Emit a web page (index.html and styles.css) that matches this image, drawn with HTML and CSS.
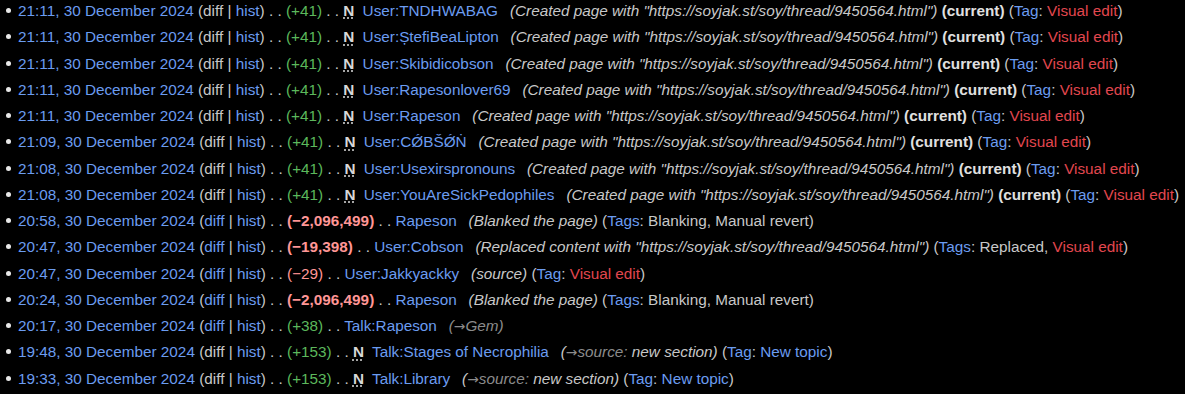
FILE: index.html
```
<!DOCTYPE html>
<html lang="en">
<head>
    <meta charset="UTF-8">
    <title>User contributions</title>
    <link rel="stylesheet" href="styles.css">
</head>
<body>
    <ul class="contribs">
        <li><a href="#">21:11, 30 December 2024</a> (<span class="dim">diff</span> | <a href="#">hist</a>) . . <span class="plus">(+41)</span> . . <abbr class="newpage" title="This edit created a new page">N</abbr> <a href="#">User:TNDHWABAG</a> <span class="comment">(Created page with "https://soyjak.st/soy/thread/9450564.html")</span> <b class="current">(current)</b> (<a href="#">Tag</a>: <a class="new" href="#">Visual edit</a>)</li>
        <li><a href="#">21:11, 30 December 2024</a> (<span class="dim">diff</span> | <a href="#">hist</a>) . . <span class="plus">(+41)</span> . . <abbr class="newpage" title="This edit created a new page">N</abbr> <a href="#">User:ȘtefiBeaLipton</a> <span class="comment">(Created page with "https://soyjak.st/soy/thread/9450564.html")</span> <b class="current">(current)</b> (<a href="#">Tag</a>: <a class="new" href="#">Visual edit</a>)</li>
        <li><a href="#">21:11, 30 December 2024</a> (<span class="dim">diff</span> | <a href="#">hist</a>) . . <span class="plus">(+41)</span> . . <abbr class="newpage" title="This edit created a new page">N</abbr> <a href="#">User:Skibidicobson</a> <span class="comment">(Created page with "https://soyjak.st/soy/thread/9450564.html")</span> <b class="current">(current)</b> (<a href="#">Tag</a>: <a class="new" href="#">Visual edit</a>)</li>
        <li><a href="#">21:11, 30 December 2024</a> (<span class="dim">diff</span> | <a href="#">hist</a>) . . <span class="plus">(+41)</span> . . <abbr class="newpage" title="This edit created a new page">N</abbr> <a href="#">User:Rapesonlover69</a> <span class="comment">(Created page with "https://soyjak.st/soy/thread/9450564.html")</span> <b class="current">(current)</b> (<a href="#">Tag</a>: <a class="new" href="#">Visual edit</a>)</li>
        <li><a href="#">21:11, 30 December 2024</a> (<span class="dim">diff</span> | <a href="#">hist</a>) . . <span class="plus">(+41)</span> . . <abbr class="newpage" title="This edit created a new page">N</abbr> <a href="#">User:Rapeson</a> <span class="comment">(Created page with "https://soyjak.st/soy/thread/9450564.html")</span> <b class="current">(current)</b> (<a href="#">Tag</a>: <a class="new" href="#">Visual edit</a>)</li>
        <li><a href="#">21:09, 30 December 2024</a> (<span class="dim">diff</span> | <a href="#">hist</a>) . . <span class="plus">(+41)</span> . . <abbr class="newpage" title="This edit created a new page">N</abbr> <a href="#">User:CǾBŠǾṄ</a> <span class="comment">(Created page with "https://soyjak.st/soy/thread/9450564.html")</span> <b class="current">(current)</b> (<a href="#">Tag</a>: <a class="new" href="#">Visual edit</a>)</li>
        <li><a href="#">21:08, 30 December 2024</a> (<span class="dim">diff</span> | <a href="#">hist</a>) . . <span class="plus">(+41)</span> . . <abbr class="newpage" title="This edit created a new page">N</abbr> <a href="#">User:Usexirspronouns</a> <span class="comment">(Created page with "https://soyjak.st/soy/thread/9450564.html")</span> <b class="current">(current)</b> (<a href="#">Tag</a>: <a class="new" href="#">Visual edit</a>)</li>
        <li><a href="#">21:08, 30 December 2024</a> (<span class="dim">diff</span> | <a href="#">hist</a>) . . <span class="plus">(+41)</span> . . <abbr class="newpage" title="This edit created a new page">N</abbr> <a href="#">User:YouAreSickPedophiles</a> <span class="comment">(Created page with "https://soyjak.st/soy/thread/9450564.html")</span> <b class="current">(current)</b> (<a href="#">Tag</a>: <a class="new" href="#">Visual edit</a>)</li>
        <li><a href="#">20:58, 30 December 2024</a> (<a href="#">diff</a> | <a href="#">hist</a>) . . <strong class="minus">(−2,096,499)</strong> . . <a href="#">Rapeson</a> <span class="comment">(Blanked the page)</span> (<a href="#">Tags</a>: Blanking, Manual revert)</li>
        <li><a href="#">20:47, 30 December 2024</a> (<a href="#">diff</a> | <a href="#">hist</a>) . . <strong class="minus">(−19,398)</strong> . . <a href="#">User:Cobson</a> <span class="comment">(Replaced content with "https://soyjak.st/soy/thread/9450564.html")</span> (<a href="#">Tags</a>: Replaced, <a class="new" href="#">Visual edit</a>)</li>
        <li><a href="#">20:47, 30 December 2024</a> (<a href="#">diff</a> | <a href="#">hist</a>) . . <span class="minus">(−29)</span> . . <a href="#">User:Jakkyackky</a> <span class="comment">(source)</span> (<a href="#">Tag</a>: <a class="new" href="#">Visual edit</a>)</li>
        <li><a href="#">20:24, 30 December 2024</a> (<a href="#">diff</a> | <a href="#">hist</a>) . . <strong class="minus">(−2,096,499)</strong> . . <a href="#">Rapeson</a> <span class="comment">(Blanked the page)</span> (<a href="#">Tags</a>: Blanking, Manual revert)</li>
        <li><a href="#">20:17, 30 December 2024</a> (<a href="#">diff</a> | <a href="#">hist</a>) . . <span class="plus">(+38)</span> . . <a href="#">Talk:Rapeson</a> <span class="comment auto">(<span class="arrow">→</span>Gem)</span></li>
        <li><a href="#">19:48, 30 December 2024</a> (<span class="dim">diff</span> | <a href="#">hist</a>) . . <span class="plus">(+153)</span> . . <abbr class="newpage" title="This edit created a new page">N</abbr> <a href="#">Talk:Stages of Necrophilia</a> <span class="comment">(<span class="autocomment"><span class="arrow">→</span>source:</span> new section)</span> (<a href="#">Tag</a>: <a href="#">New topic</a>)</li>
        <li><a href="#">19:33, 30 December 2024</a> (<span class="dim">diff</span> | <a href="#">hist</a>) . . <span class="plus">(+153)</span> . . <abbr class="newpage" title="This edit created a new page">N</abbr> <a href="#">Talk:Library</a> <span class="comment">(<span class="autocomment"><span class="arrow">→</span>source:</span> new section)</span> (<a href="#">Tag</a>: <a href="#">New topic</a>)</li>
    </ul>
</body>
</html>
```

FILE: styles.css
```
body {
    margin: 0;
    background-color: #000;
    color: #c8c8c8;
    font-family: "Liberation Sans", Arial, sans-serif;
    font-size: 15.3px;
}
.contribs {
    list-style: none;
    margin: -2px 0 0 0;
    padding: 0 0 0 18px;
}
.contribs li {
    line-height: 26.25px;
    white-space: nowrap;
}
.contribs li::before {
    content: "";
    display: inline-block;
    width: 5px;
    height: 5px;
    margin: 0 7px 0 -12px;
    border-radius: 50%;
    background-color: #e8e8e8;
    vertical-align: 3px;
}
a {
    color: #6b9cf0;
    text-decoration: none;
}
a.new {
    color: #e2474f;
}
.dim {
    color: #c8c8c8;
}
.plus {
    color: #5cb85c;
}
.minus {
    color: #ff9696;
}
strong.minus {
    font-weight: bold;
}
.newpage {
    font-weight: bold;
    color: #d8d8d8;
    margin-right: 4px;
    text-decoration: underline dotted;
    text-underline-offset: 2px;
}
.comment {
    font-style: italic;
    color: #c8c8c8;
    margin-left: 0.5em;
}
.comment.auto,
.autocomment {
    color: #8c8c8c;
}
.arrow {
    font-family: "DejaVu Sans", sans-serif;
    font-style: normal;
    font-size: 0.9em;
}
.current {
    color: #e0e0e0;
}
```
